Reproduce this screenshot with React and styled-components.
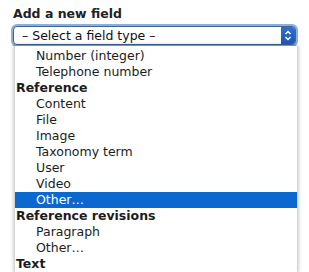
import React from "react";
import styled, { createGlobalStyle } from "styled-components";

const Global = createGlobalStyle`
  html, body { margin: 0; padding: 0; background: #fff; }
  body { font-family: "DejaVu Sans", "Liberation Sans", sans-serif; color: #222; overflow: hidden; }
`;

const Page = styled.div`
  width: 309px;
  height: 272px;
  overflow: hidden;
  padding: 6px 0 0 13px;
  box-sizing: border-box;
`;

const Title = styled.div`
  font-weight: bold;
  font-size: 12.5px;
  line-height: 15px;
  color: #222;
  margin-bottom: 5px;
`;

const Select = styled.div`
  width: 283px;
  height: 19px;
  box-sizing: border-box;
  border: 1px solid #3f6796;
  border-radius: 4px;
  box-shadow: 0 0 0 2px #8fb0d6;
  display: flex;
  align-items: stretch;
  background: #fff;
  overflow: hidden;
`;

const SelectText = styled.div`
  flex: 1;
  font-size: 12.5px;
  line-height: 17px;
  padding-left: 8px;
  color: #111;
`;

const Arrow = styled.div`
  width: 14px;
  background: linear-gradient(#2f6fd1, #1b55b6);
  display: flex;
  align-items: center;
  justify-content: center;
`;

const List = styled.div`
  margin: 1px 0 0 2px;
  width: 282px;
  background: #fff;
  box-shadow: 0 0 4px 1px rgba(0, 0, 0, 0.28);
  padding-top: 2px;
`;

const Row = styled.div`
  height: 16px;
  line-height: 16px;
  font-size: 12.5px;
  white-space: nowrap;
  padding-left: ${(p) => (p.$group ? "1px" : "21px")};
  font-weight: ${(p) => (p.$group ? "bold" : "normal")};
  background: ${(p) => (p.$active ? "#0a68cf" : "transparent")};
  color: ${(p) => (p.$active ? "#fff" : "#1c1c1c")};
`;

const rows = [
  { t: "Number (integer)" },
  { t: "Telephone number" },
  { t: "Reference", g: true },
  { t: "Content" },
  { t: "File" },
  { t: "Image" },
  { t: "Taxonomy term" },
  { t: "User" },
  { t: "Video" },
  { t: "Other…", a: true },
  { t: "Reference revisions", g: true },
  { t: "Paragraph" },
  { t: "Other…" },
  { t: "Text", g: true },
];

export default function App() {
  return (
    <>
      <Global />
      <Page>
        <Title>Add a new field</Title>
        <Select>
          <SelectText>– Select a field type –</SelectText>
          <Arrow>
            <svg width="8" height="11" viewBox="0 0 8 11">
              <path d="M1.5 4 L4 1.5 L6.5 4 M1.5 7 L4 9.5 L6.5 7" fill="none" stroke="#fff" strokeWidth="1.5" />
            </svg>
          </Arrow>
        </Select>
        <List>
          {rows.map((r, i) => (
            <Row key={i} $group={r.g} $active={r.a}>
              {r.t}
            </Row>
          ))}
        </List>
      </Page>
    </>
  );
}
